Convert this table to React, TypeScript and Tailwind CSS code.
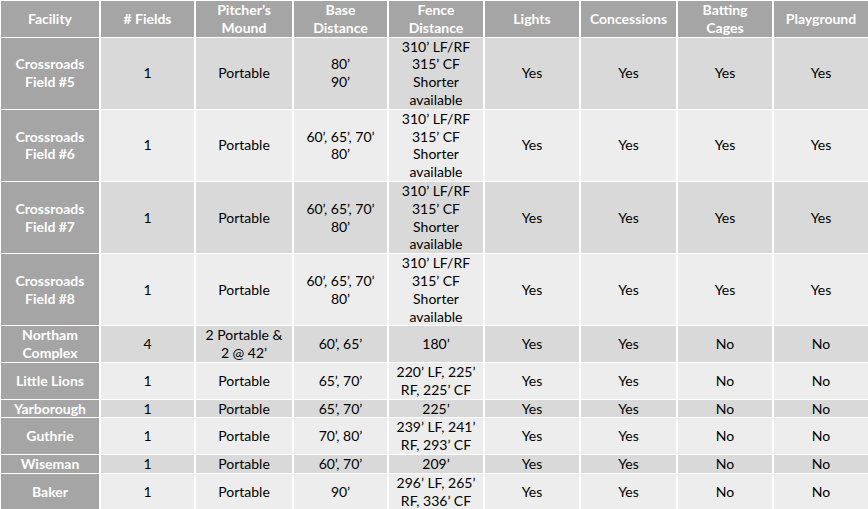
import React from "react";

type Row = {
  name: string[];
  fields: string;
  mound: string[];
  base: string[];
  fence: string[];
  vals: string[];
};

const fenceLong = ["310’ LF/RF", "315’ CF", "Shorter", "available"];

const rows: Row[] = [
  { name: ["Crossroads", "Field #5"], fields: "1", mound: ["Portable"], base: ["80’", "90’"], fence: fenceLong, vals: ["Yes", "Yes", "Yes", "Yes"] },
  { name: ["Crossroads", "Field #6"], fields: "1", mound: ["Portable"], base: ["60’, 65’, 70’", "80’"], fence: fenceLong, vals: ["Yes", "Yes", "Yes", "Yes"] },
  { name: ["Crossroads", "Field #7"], fields: "1", mound: ["Portable"], base: ["60’, 65’, 70’", "80’"], fence: fenceLong, vals: ["Yes", "Yes", "Yes", "Yes"] },
  { name: ["Crossroads", "Field #8"], fields: "1", mound: ["Portable"], base: ["60’, 65’, 70’", "80’"], fence: fenceLong, vals: ["Yes", "Yes", "Yes", "Yes"] },
  { name: ["Northam", "Complex"], fields: "4", mound: ["2 Portable &", "2 @ 42’"], base: ["60’, 65’"], fence: ["180’"], vals: ["Yes", "Yes", "No", "No"] },
  { name: ["Little Lions"], fields: "1", mound: ["Portable"], base: ["65’, 70’"], fence: ["220’ LF, 225’", "RF, 225’ CF"], vals: ["Yes", "Yes", "No", "No"] },
  { name: ["Yarborough"], fields: "1", mound: ["Portable"], base: ["65’, 70’"], fence: ["225’"], vals: ["Yes", "Yes", "No", "No"] },
  { name: ["Guthrie"], fields: "1", mound: ["Portable"], base: ["70’, 80’"], fence: ["239’ LF, 241’", "RF, 293’ CF"], vals: ["Yes", "Yes", "No", "No"] },
  { name: ["Wiseman"], fields: "1", mound: ["Portable"], base: ["60’, 70’"], fence: ["209’"], vals: ["Yes", "Yes", "No", "No"] },
  { name: ["Baker"], fields: "1", mound: ["Portable"], base: ["90’"], fence: ["296’ LF, 265’", "RF, 336’ CF"], vals: ["Yes", "Yes", "No", "No"] },
];

const headers: string[][] = [
  ["Facility"],
  ["# Fields"],
  ["Pitcher’s", "Mound"],
  ["Base", "Distance"],
  ["Fence", "Distance"],
  ["Lights"],
  ["Concessions"],
  ["Batting", "Cages"],
  ["Playground"],
];

const widths = [98, 93, 96, 93, 94, 94, 95, 94, 94];

function Lines({ lines }: { lines: string[] }) {
  return (
    <>
      {lines.map((l, i) => (
        <div key={i}>{l}</div>
      ))}
    </>
  );
}

export default function App() {
  return (
    <div className="w-[868px] h-[509px] overflow-hidden bg-white">
      <table
        className="table-fixed border-separate border-spacing-x-[2px] border-spacing-y-[1px] -ml-px w-[871px] text-[14px] leading-[17.8px] text-center"
        style={{ fontFamily: "Lato, 'Open Sans', sans-serif" }}
      >
        <colgroup>
          {widths.map((w, i) => (
            <col key={i} style={{ width: w }} />
          ))}
        </colgroup>
        <thead>
          <tr>
            {headers.map((h, i) => (
              <th
                key={i}
                className="bg-[#a5a5a5] text-white font-bold p-0 align-middle whitespace-nowrap"
              >
                <Lines lines={h} />
              </th>
            ))}
          </tr>
        </thead>
        <tbody>
          {rows.map((r, ri) => {
            const bg = ri % 2 === 0 ? "bg-[#d9d9d9]" : "bg-[#ededed]";
            const cell = `${bg} text-black p-0 align-middle whitespace-nowrap`;
            return (
              <tr key={ri}>
                <td className="bg-[#a5a5a5] text-white font-bold p-0 align-middle whitespace-nowrap">
                  <Lines lines={r.name} />
                </td>
                <td className={cell}>{r.fields}</td>
                <td className={cell}>
                  <Lines lines={r.mound} />
                </td>
                <td className={cell}>
                  <Lines lines={r.base} />
                </td>
                <td className={cell}>
                  <Lines lines={r.fence} />
                </td>
                {r.vals.map((v, vi) => (
                  <td key={vi} className={cell}>
                    {v}
                  </td>
                ))}
              </tr>
            );
          })}
        </tbody>
      </table>
    </div>
  );
}
